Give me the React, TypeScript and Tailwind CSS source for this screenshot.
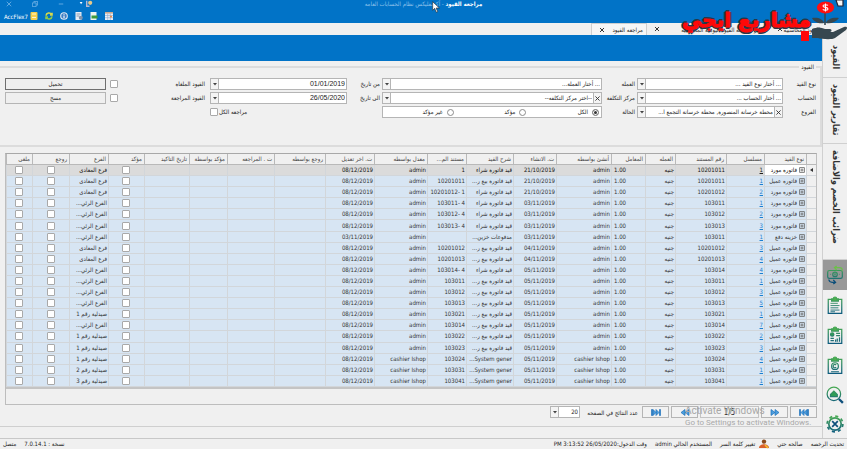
import type { ReactNode } from "react";

type Entry = {
  kind: string;
  serial: string;
  doc: string;
  by: string;
  created: string;
  note: string;
  source: string;
  edited: string;
  branch: string;
};

const PURCHASE = "قيد فاتورة شراء";
const SALE = "قيد فاتورة بيع ر...";
const SYSTEM = "System gener...";
const SUPPLIER = "فاتوره مورد";
const CUSTOMER = "فاتوره عميل";
const MAADI = "فرع المعادى";
const MAIN = "الفرع الرئي...";

const RAW: string[][] = [
  [SUPPLIER, "1", "10201011", "admin", "21/10/2019", PURCHASE, "1", "08/12/2019", MAADI],
  [CUSTOMER, "1", "10201011", "admin", "21/10/2019", SALE, "10201011", "08/12/2019", MAADI],
  [SUPPLIER, "2", "10201012", "admin", "21/10/2019", PURCHASE, "10201012- 1", "08/12/2019", MAADI],
  [SUPPLIER, "1", "103011", "admin", "03/11/2019", PURCHASE, "103011- 4", "08/12/2019", MAIN],
  [SUPPLIER, "2", "103012", "admin", "03/11/2019", PURCHASE, "103012- 4", "08/12/2019", MAIN],
  [SUPPLIER, "3", "103013", "admin", "03/11/2019", PURCHASE, "103013- 4", "08/12/2019", MAIN],
  ["خزينه دفع", "1", "103011", "admin", "03/11/2019", "مدفوعات خزين...", "", "03/11/2019", MAIN],
  [CUSTOMER, "3", "10201012", "admin", "04/11/2019", SALE, "10201012", "08/12/2019", MAADI],
  [CUSTOMER, "4", "10201013", "admin", "04/11/2019", SALE, "10201013", "08/12/2019", MAADI],
  [SUPPLIER, "4", "103014", "admin", "05/11/2019", PURCHASE, "103014- 4", "08/12/2019", MAIN],
  [CUSTOMER, "1", "103011", "admin", "05/11/2019", SALE, "103011", "08/12/2019", MAIN],
  [CUSTOMER, "3", "103012", "admin", "05/11/2019", SALE, "103012", "08/12/2019", MAIN],
  [CUSTOMER, "5", "103013", "admin", "05/11/2019", SALE, "103013", "08/12/2019", MAIN],
  [CUSTOMER, "1", "103021", "admin", "05/11/2019", SALE, "103021", "08/12/2019", "صيدلية رقم 1"],
  [CUSTOMER, "7", "103014", "admin", "05/11/2019", SALE, "103014", "08/12/2019", MAIN],
  [CUSTOMER, "2", "103022", "admin", "05/11/2019", SALE, "103022", "08/12/2019", "صيدلية رقم 1"],
  [CUSTOMER, "3", "103023", "admin", "05/11/2019", SALE, "103023", "08/12/2019", "صيدلية رقم 1"],
  [CUSTOMER, "4", "103024", "cashier Ishop", "05/11/2019", SYSTEM, "103024", "08/12/2019", "صيدلية رقم 1"],
  [CUSTOMER, "1", "103031", "cashier Ishop", "05/11/2019", SYSTEM, "103031", "08/12/2019", "صيدلية رقم 2"],
  [CUSTOMER, "1", "103041", "cashier Ishop", "05/11/2019", SYSTEM, "103041", "08/12/2019", "صيدلية رقم 3"],
];

const ENTRIES: Entry[] = RAW.map(
  ([kind, serial, doc, by, created, note, source, edited, branch]) => ({
    kind, serial, doc, by, created, note, source, edited, branch,
  }),
);

const COLUMNS = [
  { title: "", width: "w-[10px]" },
  { title: "نوع القيد", width: "w-[42px]" },
  { title: "مسلسل", width: "w-[38px]" },
  { title: "رقم المستند", width: "w-[51px]" },
  { title: "العمله", width: "w-[30px]" },
  { title: "المعامل", width: "w-[34px]" },
  { title: "أنشئ بواسطه", width: "w-[55px]" },
  { title: "ت. الانشاء", width: "w-[43px]" },
  { title: "شرح القيد", width: "w-[47px]" },
  { title: "مستند الم...", width: "w-[39px]" },
  { title: "معدل بواسطه", width: "w-[53px]" },
  { title: "ت. اخر تعديل", width: "w-[49px]" },
  { title: "روجع بواسطه", width: "w-[51px]" },
  { title: "ت . المراجعه", width: "w-[47px]" },
  { title: "مؤكد بواسطة", width: "w-[38px]" },
  { title: "تاريخ التاكيد", width: "w-[45px]" },
  { title: "مؤكد", width: "w-[36px]" },
  { title: "الفرع", width: "w-[39px]" },
  { title: "روجع", width: "w-[37px]" },
  { title: "ملغى", width: "w-auto" },
];

const CHECKBOX =
  "block size-2 shrink-0 appearance-none rounded-[1px] border border-[#a9a9a9] bg-white checked:bg-[#0173c7]";

function Caret() {
  return (
    <span className="pointer-events-none flex w-2 shrink-0 items-center justify-center border-r border-[#b5b5b5] bg-[#f4f4f4]">
      <svg viewBox="0 0 4 3" className="w-1">
        <path d="M0 0h4L2 2.6z" fill="#444" />
      </svg>
    </span>
  );
}

function Combo({ id, value, clearable }: { id: string; value: string; clearable?: boolean }) {
  return (
    <div className="flex h-3 min-w-0 border border-[#b5b5b5] bg-white">
      {clearable && (
        <button
          type="button"
          aria-label="مسح الاختيار"
          className="flex w-2 shrink-0 items-center justify-center border-l border-[#b5b5b5] bg-[#f4f4f4]"
        >
          <svg viewBox="0 0 6 6" className="size-[5px]" stroke="#333" strokeWidth="1.1">
            <path d="M.5.5l5 5M5.5.5l-5 5" />
          </svg>
        </button>
      )}
      <select id={id} className="min-w-0 flex-1 appearance-none truncate px-px leading-[10px] outline-none">
        <option>{value}</option>
      </select>
      <Caret />
    </div>
  );
}

function DateField({ id, value }: { id: string; value: string }) {
  return (
    <div className="flex h-3 min-w-0 border border-[#b5b5b5] bg-white">
      <input
        id={id}
        defaultValue={value}
        className="min-w-0 flex-1 px-px font-['Liberation_Sans',sans-serif] text-[7px] leading-[10px] outline-none"
      />
      <Caret />
    </div>
  );
}

function Label({ id, children }: { id: string; children: ReactNode }) {
  return (
    <label htmlFor={id} className="block whitespace-nowrap leading-3">
      {children}
    </label>
  );
}

function Filters() {
  return (
    <fieldset className="h-[86px] border-2 border-l-0 border-[#dcdcdc] pl-[5px] pr-1">
      <legend className="px-0.5 leading-3">القيود</legend>
      <div className="mt-[5px] grid grid-cols-[33px_146fr_35px_220fr_35px_137fr_92px_12px_101fr] gap-y-0.5">
        <Label id="kind">نوع القيد</Label>
        <Combo id="kind" value="... أختار نوع القيد ..." />
        <span className="pr-0.5"><Label id="currency">العمله</Label></span>
        <Combo id="currency" value="... أختار العملة..." />
        <span className="pr-0.5"><Label id="from">من تاريخ</Label></span>
        <DateField id="from" value="01/01/2019" />
        <span className="pr-[5px]"><Label id="cancelled">القيود الملغاه</Label></span>
        <input id="cancelled" type="checkbox" className={`${CHECKBOX} self-center`} />
        <button type="button" className="h-3 border border-[#6f6f6f] bg-[#efefef] leading-[10px]">
          تحميل
        </button>

        <Label id="account">الحساب</Label>
        <Combo id="account" value="... أختار الحساب ..." />
        <span className="pr-0.5"><Label id="cost">مركز التكلفة</Label></span>
        <Combo id="cost" value="--اختر مركز التكلفه--" clearable />
        <span className="pr-0.5"><Label id="to">الى تاريخ</Label></span>
        <DateField id="to" value="26/05/2020" />
        <span className="pr-[5px]"><Label id="reviewed">القيود المراجعة</Label></span>
        <input id="reviewed" type="checkbox" className={`${CHECKBOX} self-center`} />
        <button type="button" className="h-3 border border-[#b5b5b5] bg-[#efefef] leading-[10px]">
          مسح
        </button>

        <Label id="branches">الفروع</Label>
        <Combo id="branches" value="محطة خرسانة المنصورة, محطة خرسانة التجمع ا..." clearable />
        <span className="whitespace-nowrap pr-0.5 leading-3">الحالة</span>
        <div className="grid h-3 grid-cols-3 items-center border border-[#b5b5b5] bg-white">
          {["الكل", "مؤكد", "غير مؤكد"].map((state, i) => (
            <label key={state} className="flex items-center gap-1 pr-0.5 leading-[10px]">
              <input
                type="radio"
                name="state"
                defaultChecked={i === 0}
                className="size-[7px] appearance-none rounded-full border border-[#8c8c8c] bg-white checked:bg-[#333] checked:shadow-[inset_0_0_0_1px_white]"
              />
              {state}
            </label>
          ))}
        </div>
        <span />
        <label className="flex items-center justify-end gap-px leading-3">
          مراجعه الكل
          <input type="checkbox" className={CHECKBOX} />
        </label>
      </div>
    </fieldset>
  );
}

function RowCheck({ label }: { label: string }) {
  return <input type="checkbox" aria-label={label} className={`${CHECKBOX} mx-auto`} />;
}

function EntryRow({ entry, current }: { entry: Entry; current: boolean }) {
  const tone = current ? "bg-[#dbdbdb] text-[#111]" : "bg-[#d7e5f3] text-[#333]";
  return (
    <tr
      className={`${tone} [&>td]:overflow-hidden [&>td]:whitespace-nowrap [&>td]:border-b [&>td]:border-l [&>td]:border-[#d2d6da] [&>td]:p-0 [&>td]:pr-px`}
    >
      <td className="bg-[#f0f0f0]">
        {current && (
          <svg viewBox="0 0 3 4" className="mx-auto w-[3px]">
            <path d="M3 0v4L0 2z" fill="#333" />
          </svg>
        )}
      </td>
      <td className={current ? "bg-white" : ""}>
        <span className="flex items-center gap-0.5">
          <svg viewBox="0 0 10 10" className="size-[6px] shrink-0" fill="none" stroke="#666" strokeWidth="1.4">
            <path d="M1 1h8v8H1zM5 2.5v5M2.5 5h5" />
          </svg>
          {entry.kind}
        </span>
      </td>
      <td>
        <a href="#" className={`underline ${current ? "text-[#222]" : "text-[#1b7fd0]"}`}>
          {entry.serial}
        </a>
      </td>
      <td>{entry.doc}</td>
      <td>جنيه</td>
      <td dir="ltr" className="text-left"><span className="pl-0.5">1.00</span></td>
      <td>{entry.by}</td>
      <td>{entry.created}</td>
      <td>{entry.note}</td>
      <td dir="ltr" className="text-right">{entry.source}</td>
      <td>{entry.by}</td>
      <td>{entry.edited}</td>
      <td />
      <td />
      <td />
      <td />
      <td><RowCheck label="مؤكد" /></td>
      <td>{entry.branch}</td>
      <td><RowCheck label="روجع" /></td>
      <td><RowCheck label="ملغى" /></td>
    </tr>
  );
}

function EntriesTable() {
  return (
    <div className="border border-[#bdbdbd] border-t-[#a8a8a8] pb-[15px]">
      <table className="h-[235px] w-full table-fixed border-separate border-spacing-0 border-b-2 border-[#c4c4c4] leading-[8px]">
        <thead>
          <tr>
            {COLUMNS.map((col, i) => (
              <th
                key={i}
                className={`${col.width} h-[11px] overflow-hidden whitespace-nowrap border-b border-l border-[#b9b9b9] p-0 pr-0.5 text-right font-normal text-[#444]`}
              >
                {col.title}
              </th>
            ))}
          </tr>
        </thead>
        <tbody>
          {ENTRIES.map((entry, i) => (
            <EntryRow key={i} entry={entry} current={i === 0} />
          ))}
        </tbody>
      </table>
    </div>
  );
}

function PageButton({ label, children }: { label: string; children: ReactNode }) {
  return (
    <button
      type="button"
      aria-label={label}
      className="flex h-3 w-[27px] items-center justify-center border border-[#b5b5b5] bg-[#f2f2f2]"
    >
      <svg viewBox="0 0 20 14" className="h-[7px] w-2.5" fill="#4b9fe0" stroke="#1c6fb8" strokeWidth="1.4">
        {children}
      </svg>
    </button>
  );
}

function Pager() {
  return (
    <div className="flex items-center gap-0.5 pt-px">
      <PageButton label="الصفحة الاولى">
        <path d="M1 1h2v12H1zM17 1h2v12h-2zM10 1v12L4 7zM16 1v12l-6-6z" />
      </PageButton>
      <PageButton label="الصفحة السابقة">
        <path d="M2 1v12l8-6zM10 1v12l8-6z" />
      </PageButton>
      <input
        aria-label="الصفحة"
        defaultValue="1/5"
        dir="ltr"
        className="h-3 w-[59px] border border-[#c4c4c4] bg-[#f2f2f2] text-center text-[8px] leading-[10px] text-[#333]"
      />
      <PageButton label="الصفحة التالية">
        <path d="M18 1v12l-8-6zM10 1v12L2 7z" />
      </PageButton>
      <PageButton label="الصفحة الاخيرة">
        <path d="M1 1h2v12H1zM17 1h2v12h-2zM4 1v12l6-6zM10 1v12l6-6z" />
      </PageButton>
      <label htmlFor="size" className="mr-0.5 w-14 whitespace-nowrap">عدد النتائج في الصفحه</label>
      <div className="w-[30px]">
        <Combo id="size" value="20" />
      </div>
    </div>
  );
}

function Clipboard({ children }: { children: ReactNode }) {
  return (
    <>
      <path d="M9 6H4v25h24V6h-5" />
      <path d="M10 9V5h3a3 3 0 0 1 6 0h3v4z" fill="#4caf50" />
      {children}
    </>
  );
}

const SIDE_ICONS = [
  {
    label: "مراجعه القيود",
    art: (
      <>
        <rect x="3" y="8" width="26" height="14" rx="3" />
        <circle cx="16" cy="15" r="4" />
        <path d="M8 15h1M23 15h1M16 13v4" />
        <path d="M16 3h8a5 5 0 0 1 5 5M19 0l-4 3 4 4" stroke="#6cc04a" />
        <path d="M5 24a6 6 0 0 0 6 5h5M13 25l4 4-4 3" stroke="#0d4f7a" />
      </>
    ),
  },
  {
    label: "القيود",
    art: (
      <Clipboard>
        <path d="M8 13h13M8 17h16M8 21h14M8 25h16M8 28h8" strokeWidth="1.6" />
      </Clipboard>
    ),
  },
  {
    label: "التقارير",
    art: (
      <Clipboard>
        <circle cx="11" cy="15" r="3" fill="#2f9e54" />
        <path d="M18 13h7M18 17h7M8 22h6M8 26h6M17 28v-4M20 28v-6M24 28v-8" />
      </Clipboard>
    ),
  },
  {
    label: "الحسابات",
    art: (
      <Clipboard>
        <circle cx="16" cy="18" r="6" />
        <path d="M18 16a3 3 0 1 0 0 4M9 28h14" />
      </Clipboard>
    ),
  },
  {
    label: "بحث",
    art: (
      <>
        <circle cx="14" cy="14" r="12" />
        <path d="M23 23l7 7" strokeWidth="4" stroke="#0d4f7a" />
        <path d="M8 15l6-6 6 6v4H8z" fill="#2f9e54" />
      </>
    ),
  },
  {
    label: "الاعدادات",
    art: (
      <>
        <circle cx="16" cy="16" r="11" strokeWidth="3" />
        <circle cx="16" cy="16" r="14" strokeWidth="3" strokeDasharray="5.5 5.5" />
        <path d="M11 11l10 10M21 11L11 21" strokeWidth="3" stroke="#0d4f7a" />
      </>
    ),
  },
];

function Sidebar() {
  return (
    <nav className="flex w-6 shrink-0 flex-col bg-[#f0f0f0] text-[9px] font-bold text-[#333]">
      <svg className="absolute size-0">
        <linearGradient id="leaf" x1="0" y1="0" x2="0" y2="32" gradientUnits="userSpaceOnUse">
          <stop offset="0" stopColor="#4caf50" />
          <stop offset="1" stopColor="#0d5a80" />
        </linearGradient>
      </svg>
      {[
        ["القيود", "h-[43px] pt-2.5"],
        ["تقارير القيود", "h-[66px] pt-1.5"],
        ["ضرائب الخصم والاضافة", "h-[116px] pt-1.5"],
      ].map(([title, size]) => (
        <button
          key={title}
          type="button"
          className={`${size} flex items-center justify-end whitespace-nowrap border-b border-[#d0d0d0] [writing-mode:vertical-rl]`}
        >
          {title}
        </button>
      ))}
      {SIDE_ICONS.map((icon, i) => (
        <button
          key={icon.label}
          type="button"
          aria-label={icon.label}
          className={`flex h-[30px] items-center justify-center last:h-7 ${i === 0 ? "bg-[#989898]" : ""}`}
        >
          <svg viewBox="0 0 32 32" className="size-[18px] overflow-visible" fill="none" stroke="url(#leaf)" strokeWidth="2.2">
            {icon.art}
          </svg>
        </button>
      ))}
    </nav>
  );
}

function TitleBar() {
  return (
    <header className="relative h-[23px] overflow-hidden bg-[#0173c7] text-white">
      <div className="flex h-[7px] items-center justify-center leading-[7px]">
        <span className="font-bold">مراجعه القيود</span>
        <span className="whitespace-pre text-[#8fc1ea]"> - أكسفليكس نظام الحسابات العامه</span>
      </div>
      <div dir="ltr" className="absolute left-1.5 top-0 flex h-[7px] items-center gap-5 text-[#7db9ea]">
        <svg viewBox="0 0 8 8" className="size-1.5" fill="none" stroke="currentColor">
          <path d="M1 1l6 6M7 1L1 7" />
        </svg>
        <svg viewBox="0 0 8 8" className="size-1.5" fill="none" stroke="currentColor">
          <path d="M.5 2.5h5v5h-5zM2.5 2V.5h5v5H6" />
        </svg>
        <svg viewBox="0 0 8 8" className="size-1.5" fill="none" stroke="currentColor">
          <path d="M1 4h6" />
        </svg>
        <svg viewBox="0 0 20 10" className="-ml-1.5 h-[7px] w-4">
          <path d="M1 3h4L3 6z" fill="white" />
          <path d="M11 1v8h4" fill="none" stroke="#b8b8d0" strokeWidth="2" />
          <circle cx="16" cy="4" r="3" fill="#e6c98a" />
        </svg>
      </div>
      <div dir="ltr" className="flex h-[18px] items-center pl-1">
        <span className="mr-0.5">AccFlex7</span>
        <span className="flex items-center gap-[7px]">
          <svg viewBox="0 0 8 8" className="size-2">
            <rect x=".5" width="7" height="8" rx="1" fill="#f6d04d" />
            <path d="M2 2h4M2 5.5h4" stroke="#fff6cf" strokeWidth="1.2" />
          </svg>
          <svg viewBox="0 0 8 8" className="size-2" fill="none" strokeWidth="1.6">
            <path d="M1 3.6A3 3 0 0 1 6.5 2.4M5 3h2V.8" stroke="#d9d94a" />
            <path d="M7 4.4a3 3 0 0 1-5.5 1.2M3 5H1v2.2" stroke="#8fc94a" />
          </svg>
          <svg viewBox="0 0 8 8" className="size-2">
            <circle cx="4" cy="4" r="3.3" fill="#3f7fc4" stroke="#dfe8f2" strokeWidth="1.1" />
            <path d="M4 2v.8M4 3.5v2.7" stroke="white" strokeWidth="1.1" />
          </svg>
          <svg viewBox="0 0 8 8" className="size-2">
            <path d="M.5 0h6v8h-6z" fill="#e8eef6" />
            <path d="M1.5 2h4M1.5 4h3" stroke="#8b9bb0" />
            <circle cx="5.8" cy="5.8" r="2" fill="#7d93ad" />
          </svg>
          <svg viewBox="0 0 8 8" className="size-2">
            <path d="M.5 0h6v8h-6z" fill="#f0f4ee" />
            <path d="M1.5 3.5h6V6.5h-6z" fill="#3f9b3c" />
          </svg>
          <svg viewBox="0 0 8 8" className="size-2">
            <path d="M0 0h8v8H0z" fill="#e8eef6" />
            <path d="M0 0h8v1.6H0z" fill="#c9a98f" />
            <path d="M0 3.5h8M0 5.7h8M2.7 1.6V8M5.3 1.6V8" stroke="#8aa7cc" strokeWidth=".6" />
            <path d="M5 3.8h2v1.6H5z" fill="#e88b4a" />
          </svg>
        </span>
      </div>
      <svg viewBox="0 0 12 18" className="absolute left-[51%] top-px h-3 w-2" fill="white" stroke="#333">
        <path d="M1 1v13l3-3 2.5 6 2-1-2.3-5.5H11z" />
      </svg>
    </header>
  );
}

function DocumentTab({ title, width, active }: { title: string; width: string; active?: boolean }) {
  return (
    <div
      className={`${width} flex items-center justify-between overflow-hidden pl-[7px] pr-[3px] ${
        active ? "border-x border-t border-[#cfcfcf] bg-[#f6f6f6]" : ""
      }`}
    >
      <button type="button" className="whitespace-nowrap">{title}</button>
      <button type="button" aria-label="اغلاق">
        <svg viewBox="0 0 6 6" className="size-1.5" stroke="#333">
          <path d="M1 1l4 4M5 1L1 5" />
        </svg>
      </button>
    </div>
  );
}

function Brand() {
  return (
    <div className="pointer-events-none absolute right-0 top-0 flex items-start">
      <svg viewBox="0 0 36 42" className="h-[42px] w-9 overflow-visible">
        <path d="M25 0h7v6h-5z" fill="#f5f5f5" stroke="#223" strokeWidth="1.2" />
        <path d="M14 11v14" stroke="#37474f" strokeWidth="1.6" />
        <ellipse cx="14.5" cy="7.5" rx="8.6" ry="6" fill="#ff1010" />
        <path d="M17 5.4c-1-1-5-1-5 .6 0 1.8 5 1 5 2.9 0 1.5-4 1.7-5.2.4M14.5 3.6v8" fill="none" stroke="#fff" strokeWidth="1.1" />
        <path d="M13 23c-5 1-10-1-12-5 6-1 11 1 12 5zM15 23c5 1 10-1 13-5-6-1-12 1-13 5z" fill="#37474f" />
        <path d="M1 29c5-2 9-2 13 0h5c2 0 2 3 0 3h-5 8l11-5c3-1 4 1 2 3l-11 8c-3 2-14 1-17 0H1z" fill="#37474f" />
        <path d="M-10 31h8v10h-8z" fill="#ff0808" />
      </svg>
      <span className="mt-2 whitespace-nowrap font-['DejaVu_Sans'] text-[20px] font-bold leading-[24px] text-[#ff0808] [-webkit-text-stroke:1px_#ff0808] [text-shadow:2px_0_0_#263849,-2px_0_0_#263849,0_-2px_0_#263849,0_2px_0_#263849,1px_1px_0_#263849,-1px_-1px_0_#263849]">
        مشاريع ايجي
      </span>
    </div>
  );
}

function StatusBar() {
  return (
    <footer className="flex h-[11px] items-center gap-2 whitespace-nowrap border-t border-[#c8c8c8] px-[3px] leading-[8px]">
      <a href="#">تحديث الرخصه</a>
      <span>صالحه حتي</span>
      <a href="#" className="flex items-center gap-1">
        <svg viewBox="0 0 10 10" className="size-2.5">
          <circle cx="5" cy="2.6" r="2.2" fill="#8a4a1c" />
          <path d="M0 9c0-5 10-5 10 0z" fill="#d9602a" />
          <path d="M6 6l3 3" stroke="#f2c230" strokeWidth="1.6" />
        </svg>
        تغيير كلمة السر
      </a>
      <span>المستخدم الحالي admin</span>
      <span>وقت الدخول:26/05/2020 3:13:52 PM</span>
      <span className="mr-auto">نسخة : 7.0.14.1</span>
      <span>متصل</span>
    </footer>
  );
}

export default function App() {
  return (
    <div
      dir="rtl"
      className="relative flex min-h-screen flex-col overflow-hidden bg-[#f0f0f0] font-['DejaVu_Sans_Condensed','DejaVu_Sans',sans-serif] text-[6px] text-[#222]"
    >
      <TitleBar />
      <div className="flex h-3 bg-[#f0f0f0] pr-6">
        <DocumentTab title="القيود المحاسبيه" width="w-[53px]" />
        <DocumentTab title="تقارير مراجعه القيود اليوميه المحاسبيه" width="w-[123px]" />
        <DocumentTab title="مراجعه القيود" width="w-[56px]" active />
      </div>
      <div className="flex flex-1">
        <Sidebar />
        <main className="flex min-w-0 flex-1 flex-col border-r border-[#d0d0d0]">
          <div className="h-[26px] bg-[#0173c7]" />
          <Filters />
          <div className="mt-1.5 px-[5px]">
            <EntriesTable />
            <Pager />
          </div>
          <div className="mt-2 border-t border-[#cfcfcf]" />
        </main>
      </div>
      <StatusBar />
      <Brand />
      <div dir="ltr" className="pointer-events-none absolute bottom-5 right-9 w-[126px] whitespace-nowrap font-['Roboto',sans-serif] text-[#a8a8a8]">
        <div className="text-[10px] leading-3">Activate Windows</div>
        <div className="text-[8px] leading-3">Go to Settings to activate Windows.</div>
      </div>
    </div>
  );
}
